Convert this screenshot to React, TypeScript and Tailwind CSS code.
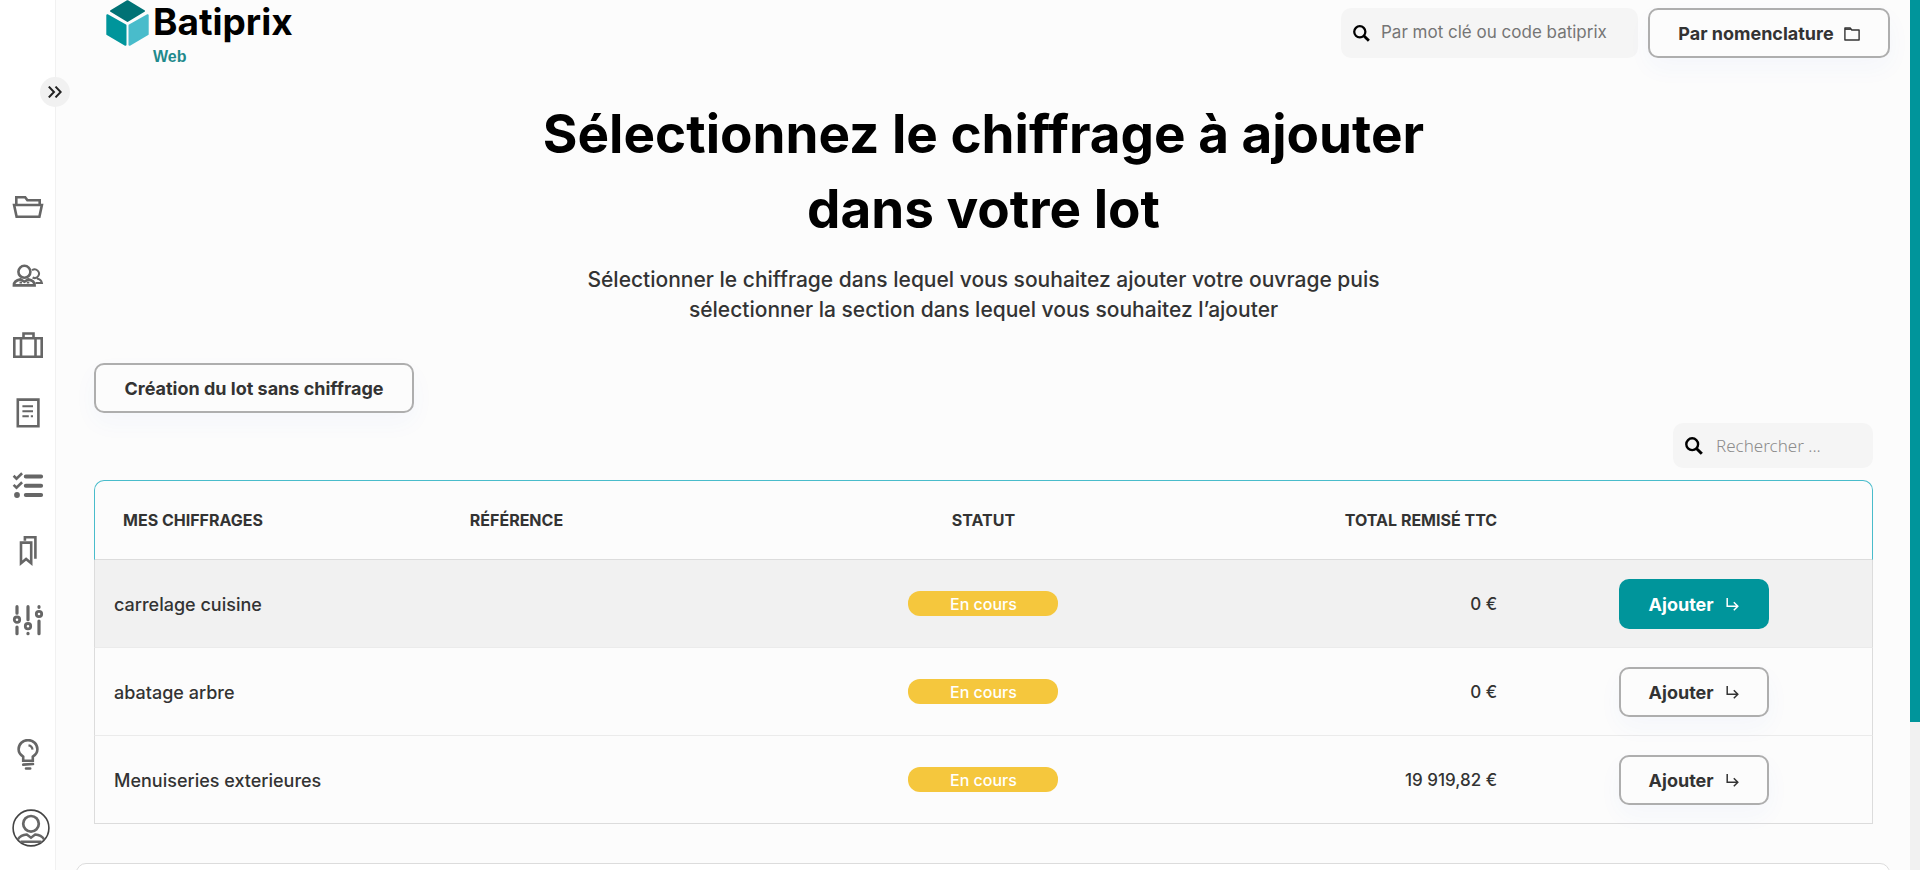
import type { ReactNode } from "react";

type Quote = { name: string; reference: string; status: string; total: string; active?: boolean };

const quotes: Quote[] = [
  { name: "carrelage cuisine", reference: "", status: "En cours", total: "0 €", active: true },
  { name: "abatage arbre", reference: "", status: "En cours", total: "0 €" },
  { name: "Menuiseries exterieures", reference: "", status: "En cours", total: "19 919,82 €" },
];

function Glyph({ children }: { children: ReactNode }) {
  return (
    <svg viewBox="0 0 32 32" className="size-8" fill="none" stroke="#666" strokeWidth="2.6" aria-hidden="true">
      {children}
    </svg>
  );
}

const navItems: { label: string; icon: ReactNode }[] = [
  {
    label: "Dossiers",
    icon: (
      <Glyph>
        <path d="M4.300 13V6.200h8.900l2.200 3h12.300V13M2.100 14h27.800l-2.500 11.800H4.600z" />
      </Glyph>
    ),
  },
  {
    label: "Clients",
    icon: (
      <Glyph>
        <circle cx="12.400" cy="11.800" r="6" />
        <path d="M1.900 25.400c0-3.400 3-5.400 6.600-6l3.900 2.400 3.800-2.400c3.600.6 6.400 2.600 6.400 6z" />
        <path d="M7.500 22.600h2.500M14.800 22.600h2.500" strokeWidth="2" />
        <path d="M20 10.300a4.300 4.300 0 1 1 .6 7.200M25 18.600c2.800.6 4.400 2.200 4.900 4.400h-6.300" strokeWidth="2" />
      </Glyph>
    ),
  },
  {
    label: "Bibliothèque",
    icon: (
      <Glyph>
        <path d="M2.300 9.300h27.400v18.400H2.300zM9 9.300v18.400M23.500 9.300v18.400M11.500 9V4.500h10V9" />
      </Glyph>
    ),
  },
  {
    label: "Documents",
    icon: (
      <Glyph>
        <path d="M5.800 1.600h20.600v26.600H5.800z" />
        <path d="M10.400 8.300h10.600M10.400 13.300h10.600M10.400 18.300h6.400M18.800 18.300h2.200" strokeWidth="2" />
      </Glyph>
    ),
  },
  {
    label: "Tâches",
    icon: (
      <Glyph>
        <path d="M1.600 8.800l2.900 2.800 5.600-5.400M1.600 17.900l2.900 2.800 5.600-5.400" strokeWidth="2.600" />
        <path d="M13.800 9.400h15.300M13.800 18.700h15.300M13.800 28.100h15.300" strokeWidth="4" strokeLinecap="round" />
        <circle cx="5" cy="28" r="2.900" fill="#666" stroke="none" />
      </Glyph>
    ),
  },
  {
    label: "Favoris",
    icon: (
      <Glyph>
        <path d="M9 6.600h10.200v20.600l-5.100-4.300-5.100 4.300zM12.900 4.700V1.300h10.500v21.400" strokeWidth="2.600" />
      </Glyph>
    ),
  },
  {
    label: "Réglages",
    icon: (
      <Glyph>
        <g strokeWidth="3.200" strokeLinecap="round">
          <path d="M5 1.700v6.500M5 22v6.700M16 1.700v13M16 28.300v.4M27 1.700v.6M27 16v12.700" />
        </g>
        <circle cx="5" cy="14.700" r="2.700" strokeWidth="2.800" />
        <circle cx="16" cy="21.200" r="2.700" strokeWidth="2.800" />
        <circle cx="27" cy="9" r="2.700" strokeWidth="2.800" />
      </Glyph>
    ),
  },
];

function BulbIcon() {
  return (
    <Glyph>
      <path d="M11.200 21.800v-4.200c-3-1.900-4.600-4.300-4.600-7.300a9.400 9.200 0 0 1 18.800 0c0 3-1.600 5.400-4.600 7.300v4.200z" />
      <path d="M16.500 6.300c2.400.3 3.800 2 4 4.400" strokeWidth="2.200" />
      <path d="M11.200 25.600l9.800-.6M14 29.500h4.200" strokeWidth="2.600" strokeLinecap="round" />
    </Glyph>
  );
}

function AvatarIcon() {
  return (
    <svg viewBox="0 0 38 38" className="size-[38px]" fill="none" aria-hidden="true">
      <circle cx="19" cy="19" r="17.900" stroke="#444" strokeWidth="1.600" />
      <circle cx="19" cy="14.800" r="7.800" stroke="#666" strokeWidth="2.700" />
      <path d="M5.800 30.500c2-3.200 5-4.800 9-5l4.200 3.200 4.200-3.200c4 .2 7 1.800 9 5M8.500 32.700h21" stroke="#666" strokeWidth="2.400" />
    </svg>
  );
}

function SearchIcon({ className }: { className: string }) {
  return (
    <svg viewBox="0 0 18 18" className={className} fill="none" stroke="#000" aria-hidden="true">
      <circle cx="7.200" cy="7.200" r="5.900" strokeWidth="2.400" />
      <path d="M11.200 11.200l5.600 5.600" strokeWidth="3" />
    </svg>
  );
}

function FolderIcon() {
  return (
    <svg viewBox="0 0 16 14" className="h-3.5 w-4" fill="none" stroke="#333" strokeWidth="1.400" aria-hidden="true">
      <path d="M.9 13V1h5.300l1.600 2h7.300v10z" strokeLinejoin="round" />
      <path d="M1 2.200h5.800" />
    </svg>
  );
}

function ReplyIcon() {
  return (
    <svg viewBox="0 0 13 14" className="h-3.5 w-[13px]" fill="none" stroke="currentColor" strokeWidth="1.500" aria-hidden="true">
      <path d="M1.200 0v8.200h10.300M7.800 4.200l4 4-4 4" />
    </svg>
  );
}

function Logo() {
  return (
    <a href="#accueil" className="flex gap-1" aria-label="Batiprix Web">
      <svg viewBox="0 0 43 46" className="h-[46px] w-[43px]" aria-hidden="true">
        <g strokeLinejoin="round" strokeWidth="2">
          <path d="M21.500 1.200 38 11 21.500 21 5 11z" fill="#007275" stroke="#007275" />
          <path d="M1.300 15.200 19.500 25.400V44.800L1.300 34.200z" fill="#00959b" stroke="#00959b" />
          <path d="M41.700 15.200 23.500 25.400V44.800L41.700 34.200z" fill="#49bccb" stroke="#49bccb" />
        </g>
      </svg>
      <span className="flex flex-col">
        <span className="text-[37px] leading-[44px] font-bold text-black">Batiprix</span>
        <span className="font-['Liberation_Sans',sans-serif] text-base leading-[26px] font-bold text-[#1f8a8c]">Web</span>
      </span>
    </a>
  );
}

const outlineButton =
  "flex h-[50px] items-center rounded-[10px] border-2 border-[#aeaeae] bg-[#fcfcfc] pt-0.5 text-lg font-bold text-[#333] shadow-[0_10px_25px_rgba(60,110,240,0.04)]";

export default function App() {
  return (
    <div className="flex h-screen overflow-hidden bg-[#fcfcfc] font-[Inter,sans-serif] text-[#333]">
      <aside className="relative flex w-14 shrink-0 flex-col border-r border-[#f1f1f1] bg-white pt-[172px]">
        <button
          type="button"
          aria-label="Déplier le menu"
          className="absolute top-[77px] left-10 z-10 flex size-[30px] items-center justify-center rounded-full bg-[#f1f1f1]"
        >
          <svg viewBox="0 0 14 12" className="h-3 w-3.5" fill="none" stroke="#222" strokeWidth="2" aria-hidden="true">
            <path d="M.8.600 6 6 .8 11.400M7.500.6l5.200 5.400-5.200 5.400" />
          </svg>
        </button>
        <nav className="flex flex-col">
          {navItems.map((item) => (
            <a key={item.label} href="#menu" aria-label={item.label} className="flex h-[69px] items-center justify-center">
              {item.icon}
            </a>
          ))}
        </nav>
        <a href="#aide" aria-label="Aide" className="mt-auto flex h-16 items-center justify-center">
          <BulbIcon />
        </a>
        <a href="#profil" aria-label="Profil" className="mt-[22px] mb-[23px] flex justify-end pr-[5px]">
          <AvatarIcon />
        </a>
      </aside>

      <div className="flex min-w-0 flex-1 flex-col">
        <header className="flex h-[58px] items-start justify-between pr-5 pl-[50px]">
          <Logo />
          <div className="flex gap-2.5 pt-2">
            <label className="flex h-[50px] w-[297px] items-center gap-[11px] rounded-[10px] bg-[#f5f5f5] pl-3">
              <SearchIcon className="size-[17px] shrink-0" />
              <input
                type="text"
                aria-label="Recherche par mot clé"
                placeholder="Par mot clé ou code batiprix"
                className="w-full min-w-0 bg-transparent text-[17px] text-[#333] outline-none placeholder:text-[#757575]"
              />
            </label>
            <button type="button" className={`${outlineButton} w-[242px] justify-center gap-2.5`}>
              Par nomenclature
              <FolderIcon />
            </button>
          </div>
        </header>

        <main className="flex flex-col pt-[39px] pr-[37px] pl-[38px]">
          <h1 className="text-center text-[53px] leading-[75px] font-bold text-black">
            Sélectionnez le chiffrage à ajouter
            <br />
            dans votre lot
          </h1>
          <p className="mt-[18px] text-center text-[21px] leading-[30px] font-medium">
            Sélectionner le chiffrage dans lequel vous souhaitez ajouter votre ouvrage puis
            <br />
            sélectionner la section dans lequel vous souhaitez l’ajouter
          </p>

          <button type="button" className={`${outlineButton} mt-[38px] w-80 justify-center self-start`}>
            Création du lot sans chiffrage
          </button>

          <label className="mt-2.5 flex h-[45px] w-[200px] items-center gap-[13px] self-end rounded-[10px] bg-[#f5f5f5] pl-3">
            <SearchIcon className="size-[18px] shrink-0" />
            <input
              type="text"
              aria-label="Rechercher un chiffrage"
              placeholder="Rechercher ..."
              className="w-full min-w-0 bg-transparent font-['Noto_Sans',sans-serif] text-[17px] font-light outline-none placeholder:text-[#8c8c8c]"
            />
          </label>

          <table className="mt-3 w-full table-fixed border-separate border-spacing-0 font-medium">
            <thead className="text-base font-bold">
              <tr className="h-20">
                <th className="rounded-tl-[10px] border-t border-b border-l border-t-[#49bccb] border-b-[#dcdcdc] border-l-[#49bccb] pl-7 text-left">
                  MES CHIFFRAGES
                </th>
                <th className="border-t border-b border-t-[#49bccb] border-b-[#dcdcdc] pl-5 text-left">RÉFÉRENCE</th>
                <th className="border-t border-b border-t-[#49bccb] border-b-[#dcdcdc] text-center">STATUT</th>
                <th className="border-t border-b border-t-[#49bccb] border-b-[#dcdcdc] pr-5 text-right">TOTAL REMISÉ TTC</th>
                <th
                  aria-label="Action"
                  className="rounded-tr-[10px] border-t border-r border-b border-t-[#49bccb] border-r-[#49bccb] border-b-[#dcdcdc]"
                />
              </tr>
            </thead>
            <tbody className="text-lg [&>tr:last-child>td]:border-b-[#dcdcdc]">
              {quotes.map((quote) => (
                <tr key={quote.name} className={quote.active ? "h-22 bg-[#f1f1f1]" : "h-22"}>
                  <td className="border-b border-l border-b-[#ebebeb] border-l-[#dcdcdc] pt-0.5 pl-[19px]">{quote.name}</td>
                  <td className="border-b border-[#ebebeb] pt-0.5 pl-5">{quote.reference}</td>
                  <td className="border-b border-[#ebebeb]">
                    <span className="mx-auto flex h-[25px] w-[150px] items-center justify-center rounded-xl bg-[#f5c73d] text-base text-white">
                      {quote.status}
                    </span>
                  </td>
                  <td className="border-b border-[#ebebeb] pt-0.5 pr-5 text-right text-[17px]">{quote.total}</td>
                  <td className="border-r border-b border-r-[#dcdcdc] border-b-[#ebebeb] pr-0.5">
                    <button
                      type="button"
                      className={
                        quote.active
                          ? "mx-auto flex h-[50px] w-[150px] items-center justify-center gap-3 rounded-[10px] bg-[#00959b] pt-0.5 text-lg font-bold text-white"
                          : `${outlineButton} mx-auto w-[150px] justify-center gap-3`
                      }
                    >
                      Ajouter
                      <ReplyIcon />
                    </button>
                  </td>
                </tr>
              ))}
            </tbody>
          </table>
        </main>

        <section className="mx-5 mt-[39px] h-40 shrink-0 rounded-[10px] border border-[#dcdcdc] bg-white" aria-label="Détail" />
      </div>

      <div className="w-2.5 shrink-0 bg-[#f1f1f1]">
        <div className="h-[83%] bg-[#00959b]" />
      </div>
    </div>
  );
}
